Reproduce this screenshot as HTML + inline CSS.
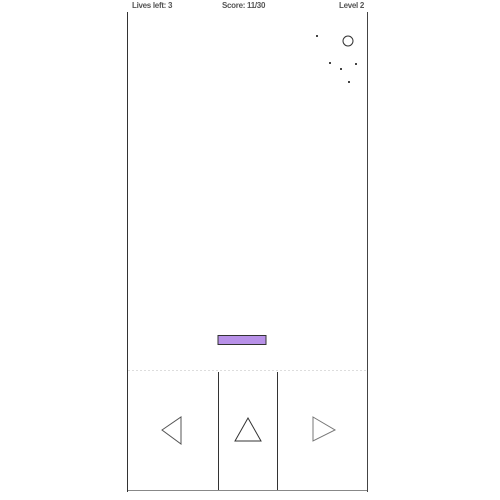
<!DOCTYPE html>
<html><head><style>
html,body{margin:0;padding:0;background:#fff;width:500px;height:500px;overflow:hidden;position:relative;font-family:"Liberation Sans",sans-serif}
.t{position:absolute;top:1px;font-size:8px;font-weight:bold;color:#555;letter-spacing:-0.3px}
</style></head><body>
<div class="t" style="left:132px">Lives left: 3</div>
<div class="t" style="left:222px">Score: 11/30</div>
<div class="t" style="left:339px">Level 2</div>
<svg width="500" height="500" style="position:absolute;left:0;top:0">
<line x1="127.5" y1="12" x2="127.5" y2="492" stroke="#333" stroke-width="1"/>
<line x1="367.5" y1="12" x2="367.5" y2="492" stroke="#444" stroke-width="1"/>
<line x1="128" y1="370.5" x2="367" y2="370.5" stroke="#ddd" stroke-dasharray="2,2"/>
<line x1="128" y1="490.5" x2="367" y2="490.5" stroke="#888"/>
<line x1="218.5" y1="372" x2="218.5" y2="490" stroke="#333"/>
<line x1="277.5" y1="372" x2="277.5" y2="490" stroke="#333"/>
<rect x="218" y="335.5" width="48" height="9" fill="#b891e8" stroke="#333" stroke-width="1"/>
<circle cx="348" cy="41" r="5" fill="#fff" stroke="#333"/>
<g fill="#444"><rect x="316" y="35" width="2" height="2"/><rect x="329" y="62" width="2" height="2"/><rect x="340" y="68" width="2" height="2"/><rect x="355" y="63" width="2" height="2"/><rect x="348" y="81" width="2" height="2"/></g>
<polygon points="162,430 181,417 181,444" fill="none" stroke="#555"/>
<polygon points="248,418 235,441 261,441" fill="none" stroke="#333"/>
<polygon points="313,417 335,430 313,441" fill="none" stroke="#777"/>
</svg>
</body></html>
